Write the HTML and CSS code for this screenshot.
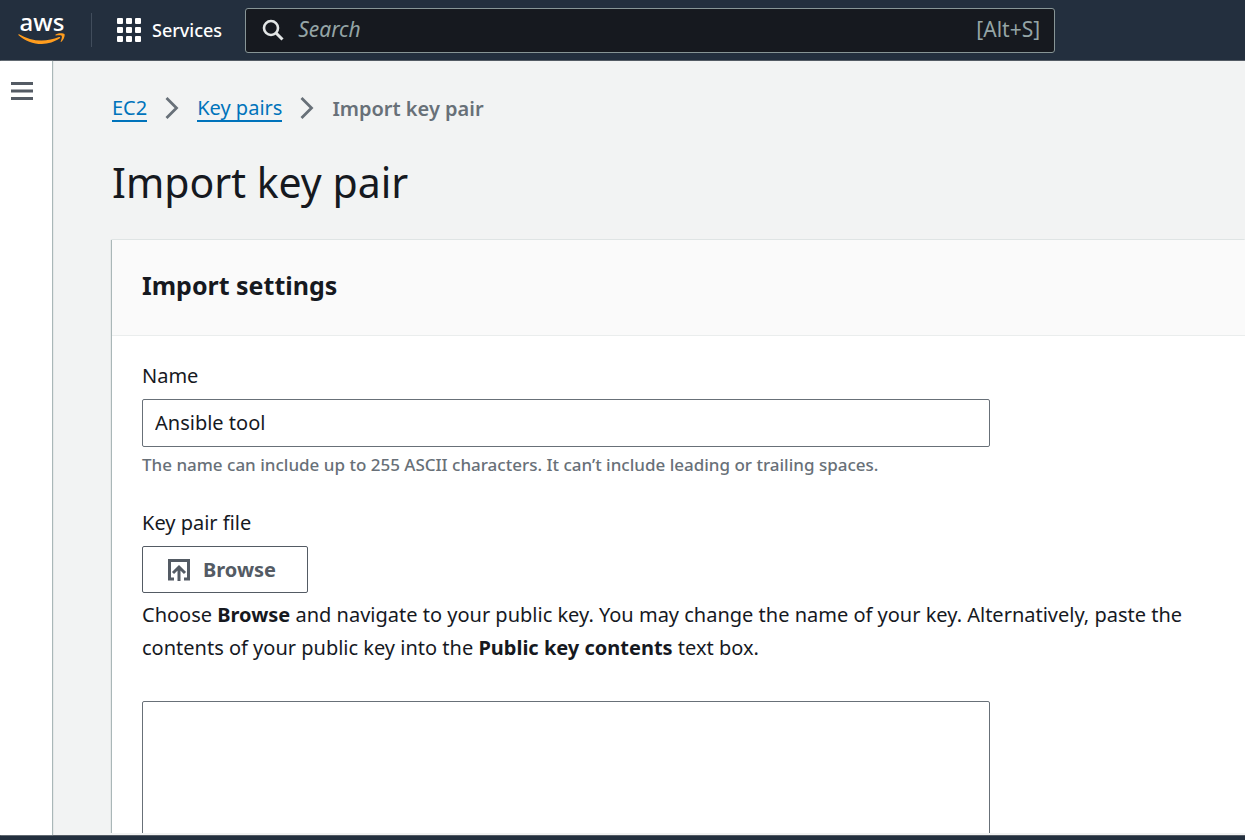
FILE: index.html
```html
<!DOCTYPE html>
<html lang="en">
<head>
<meta charset="utf-8">
<title>Import key pair</title>
<link rel="stylesheet" href="styles.css">
</head>
<body>
<header class="topbar">
  <a class="logo" href="#" aria-label="aws home">
    <span class="logo-text">aws</span>
    <svg class="logo-smile" width="48" height="13" viewBox="0 0 48 13" fill="#ff9d1e" aria-hidden="true">
      <path d="M0.6 2.2C0 1.6 0.6 0.9 1.5 1.4C8 5.3 15.500 7.600 23.500 7.600C29.500 7.600 35.500 6.400 41 4.100C42 3.700 42.700 4.600 41.800 5.300C37 8.800 30 11 23.800 11C15 11 6.900 7.800 0.6 2.200Z"/>
      <path d="M43.600 2.700C42.900 1.800 39.500 2.200 37.900 2.400C37.300 2.500 37.200 2 37.700 1.600C40.500 -0.300 45.500 0.200 46.400 0.900C47.300 1.900 46 6.600 43.400 8.800C42.900 9.200 42.500 9 42.700 8.500C43.300 7 44.400 3.700 43.600 2.700Z"/>
    </svg>
  </a>
  <button class="services" type="button">
    <svg width="24" height="24" viewBox="0 0 24 24" fill="#fff" aria-hidden="true">
      <rect width="6" height="6" rx="1"/><rect x="9" width="6" height="6" rx="1"/><rect x="18" width="6" height="6" rx="1"/>
      <rect y="9" width="6" height="6" rx="1"/><rect x="9" y="9" width="6" height="6" rx="1"/><rect x="18" y="9" width="6" height="6" rx="1"/>
      <rect y="18" width="6" height="6" rx="1"/><rect x="9" y="18" width="6" height="6" rx="1"/><rect x="18" y="18" width="6" height="6" rx="1"/>
    </svg>
    <span>Services</span>
  </button>
  <label class="search">
    <svg width="22" height="22" viewBox="0 0 22 22" fill="none" stroke="#e3e6e6" aria-hidden="true">
      <circle cx="9" cy="9" r="7" stroke-width="2.600"/><path d="M14 14l6.500 6.500" stroke-width="3"/>
    </svg>
    <input class="search-input" type="text" placeholder="Search" aria-label="Search">
    <span class="shortcut">[Alt+S]</span>
  </label>
</header>
<div class="shell">
  <nav class="rail" aria-label="Navigation">
    <button class="menu" type="button" aria-label="Open navigation">
      <svg width="22" height="18" viewBox="0 0 22 18" fill="#545b64" aria-hidden="true">
        <rect width="22" height="3"/><rect y="7.500" width="22" height="3"/><rect y="15" width="22" height="3"/>
      </svg>
    </button>
  </nav>
  <main class="content">
    <nav class="crumbs" aria-label="Breadcrumb">
      <a href="#">EC2</a>
      <svg width="14" height="22" viewBox="0 0 14 22" fill="none" stroke="#687078" stroke-width="2.800" aria-hidden="true"><path d="M1.500 1L11.500 11L1.500 21"/></svg>
      <a href="#">Key pairs</a>
      <svg width="14" height="22" viewBox="0 0 14 22" fill="none" stroke="#687078" stroke-width="2.800" aria-hidden="true"><path d="M1.500 1L11.500 11L1.500 21"/></svg>
      <span class="current">Import key pair</span>
    </nav>
    <h1 class="title">Import key pair</h1>
    <section class="card">
      <h2 class="card-head">Import settings</h2>
      <form class="card-body">
        <label class="label" for="name">Name</label>
        <input class="field" id="name" type="text" value="Ansible tool">
        <p class="hint">The name can include up to 255 ASCII characters. It can’t include leading or trailing spaces.</p>
        <span class="label" id="file-label">Key pair file</span>
        <button class="browse" type="button" aria-describedby="file-label">
          <svg width="22" height="22" viewBox="0 0 22 22" fill="none" stroke="#545b64" stroke-width="3" aria-hidden="true">
            <path d="M6 20H1.500V1.500H20.500V20H16"/><path d="M11 22V8M5 14l6-6l6 6"/>
          </svg>
          <span>Browse</span>
        </button>
        <p class="text">Choose <b>Browse</b> and navigate to your public key. You may change the name of your key. Alternatively, paste the contents of your public key into the <b>Public key contents</b> text box.</p>
        <textarea class="field area" aria-label="Public key contents"></textarea>
      </form>
    </section>
  </main>
</div>
<footer class="footer"></footer>
</body>
</html>
```
FILE: styles.css
```css
* { box-sizing: border-box; }
body {
  margin: 0;
  height: 100vh;
  display: flex;
  flex-direction: column;
  overflow: hidden;
  background: #f2f3f3;
  color: #16191f;
  font-family: "Noto Sans", "Open Sans", sans-serif;
  font-size: 20px;
  line-height: 33px;
}
button, input, textarea { font: inherit; color: inherit; }
button { padding: 0; border: 0; background: none; cursor: pointer; }
svg { display: block; flex: none; }

.topbar {
  flex: none;
  display: flex;
  align-items: center;
  height: 61px;
  padding-left: 18px;
  background: #232f3e;
  border-bottom: 1px solid #545b64;
  color: #fff;
}
.logo {
  display: flex;
  flex-direction: column;
  align-items: center;
  padding-bottom: 3px;
  color: #fff;
  text-decoration: none;
}
.logo-text { font-size: 24px; line-height: 22px; font-weight: 500; }
.services {
  display: flex;
  align-items: center;
  gap: 11px;
  height: 34px;
  margin-left: 25px;
  padding: 0 23px 0 25px;
  border-left: 1px solid #414d5c;
  font-size: 18px;
  font-weight: 500;
}
.search {
  display: flex;
  align-items: center;
  gap: 14px;
  flex: 0 1 810px;
  min-width: 0;
  height: 45px;
  padding: 0 14px 0 16px;
  border: 1px solid #879596;
  border-radius: 3px;
  background: #16191f;
  color: #95a5a6;
  font-size: 21px;
}
.search-input {
  flex: 1;
  min-width: 0;
  padding: 0 0 2px;
  border: 0;
  outline: 0;
  background: none;
}
.search-input::placeholder { color: #95a5a6; opacity: 1; font-style: italic; }
.shortcut { padding-bottom: 2px; }

.shell { flex: 1; display: flex; min-height: 0; }
.rail {
  z-index: 1;
  flex: none;
  width: 52px;
  padding: 21px 0 0 11px;
  background: #fff;
  box-shadow: 1px 0 1px #aab7b8;
}
.menu { display: block; }
.content {
  flex: 1;
  min-width: 0;
  margin-bottom: 2px;
  padding: 30px 0 0 60px;
  overflow: auto;
  scrollbar-width: none;
}
.crumbs { display: flex; align-items: center; gap: 18px; height: 34px; }
.crumbs a {
  padding-top: 2px;
  color: #0073bb;
  line-height: 24px;
  border-bottom: 2px solid #0073bb;
  text-decoration: none;
}
.current { color: #687078; font-weight: 600; }
.title { margin: 30px 0 31px; font-size: 41px; line-height: 54px; font-weight: 400; }
.card { background: #fff; box-shadow: -1px 0 1px #aab7b8, 0 -1px 0 #eaeded; }
.card-head {
  margin: 0;
  padding: 27px 30px 31px;
  background: #fafafa;
  border-bottom: 1px solid #eaeded;
  font-size: 25px;
  line-height: 37px;
  font-weight: 700;
}
.card-body { padding: 24px 30px; }
.label { display: block; line-height: 32px; }
.field {
  display: block;
  width: 100%;
  max-width: 848px;
  height: 48px;
  margin-top: 7px;
  padding: 0 12px 2px;
  border: 1px solid #687078;
  border-radius: 2px;
  background: #fff;
}
.hint { margin: 4px 0 28px; color: #687078; font-size: 17px; line-height: 28px; font-weight: 500; }
.browse {
  display: flex;
  align-items: center;
  gap: 13px;
  height: 47px;
  margin-top: 7px;
  padding: 0 31px 0 25px;
  border: 1px solid #545b64;
  border-radius: 2px;
  color: #545b64;
  font-weight: 700;
}
.text { margin: 5px 0 37px; }
.area { height: 240px; resize: none; }
.footer { flex: none; height: 5px; border-top: 1px solid #545b64; background: #232f3e; }
```
